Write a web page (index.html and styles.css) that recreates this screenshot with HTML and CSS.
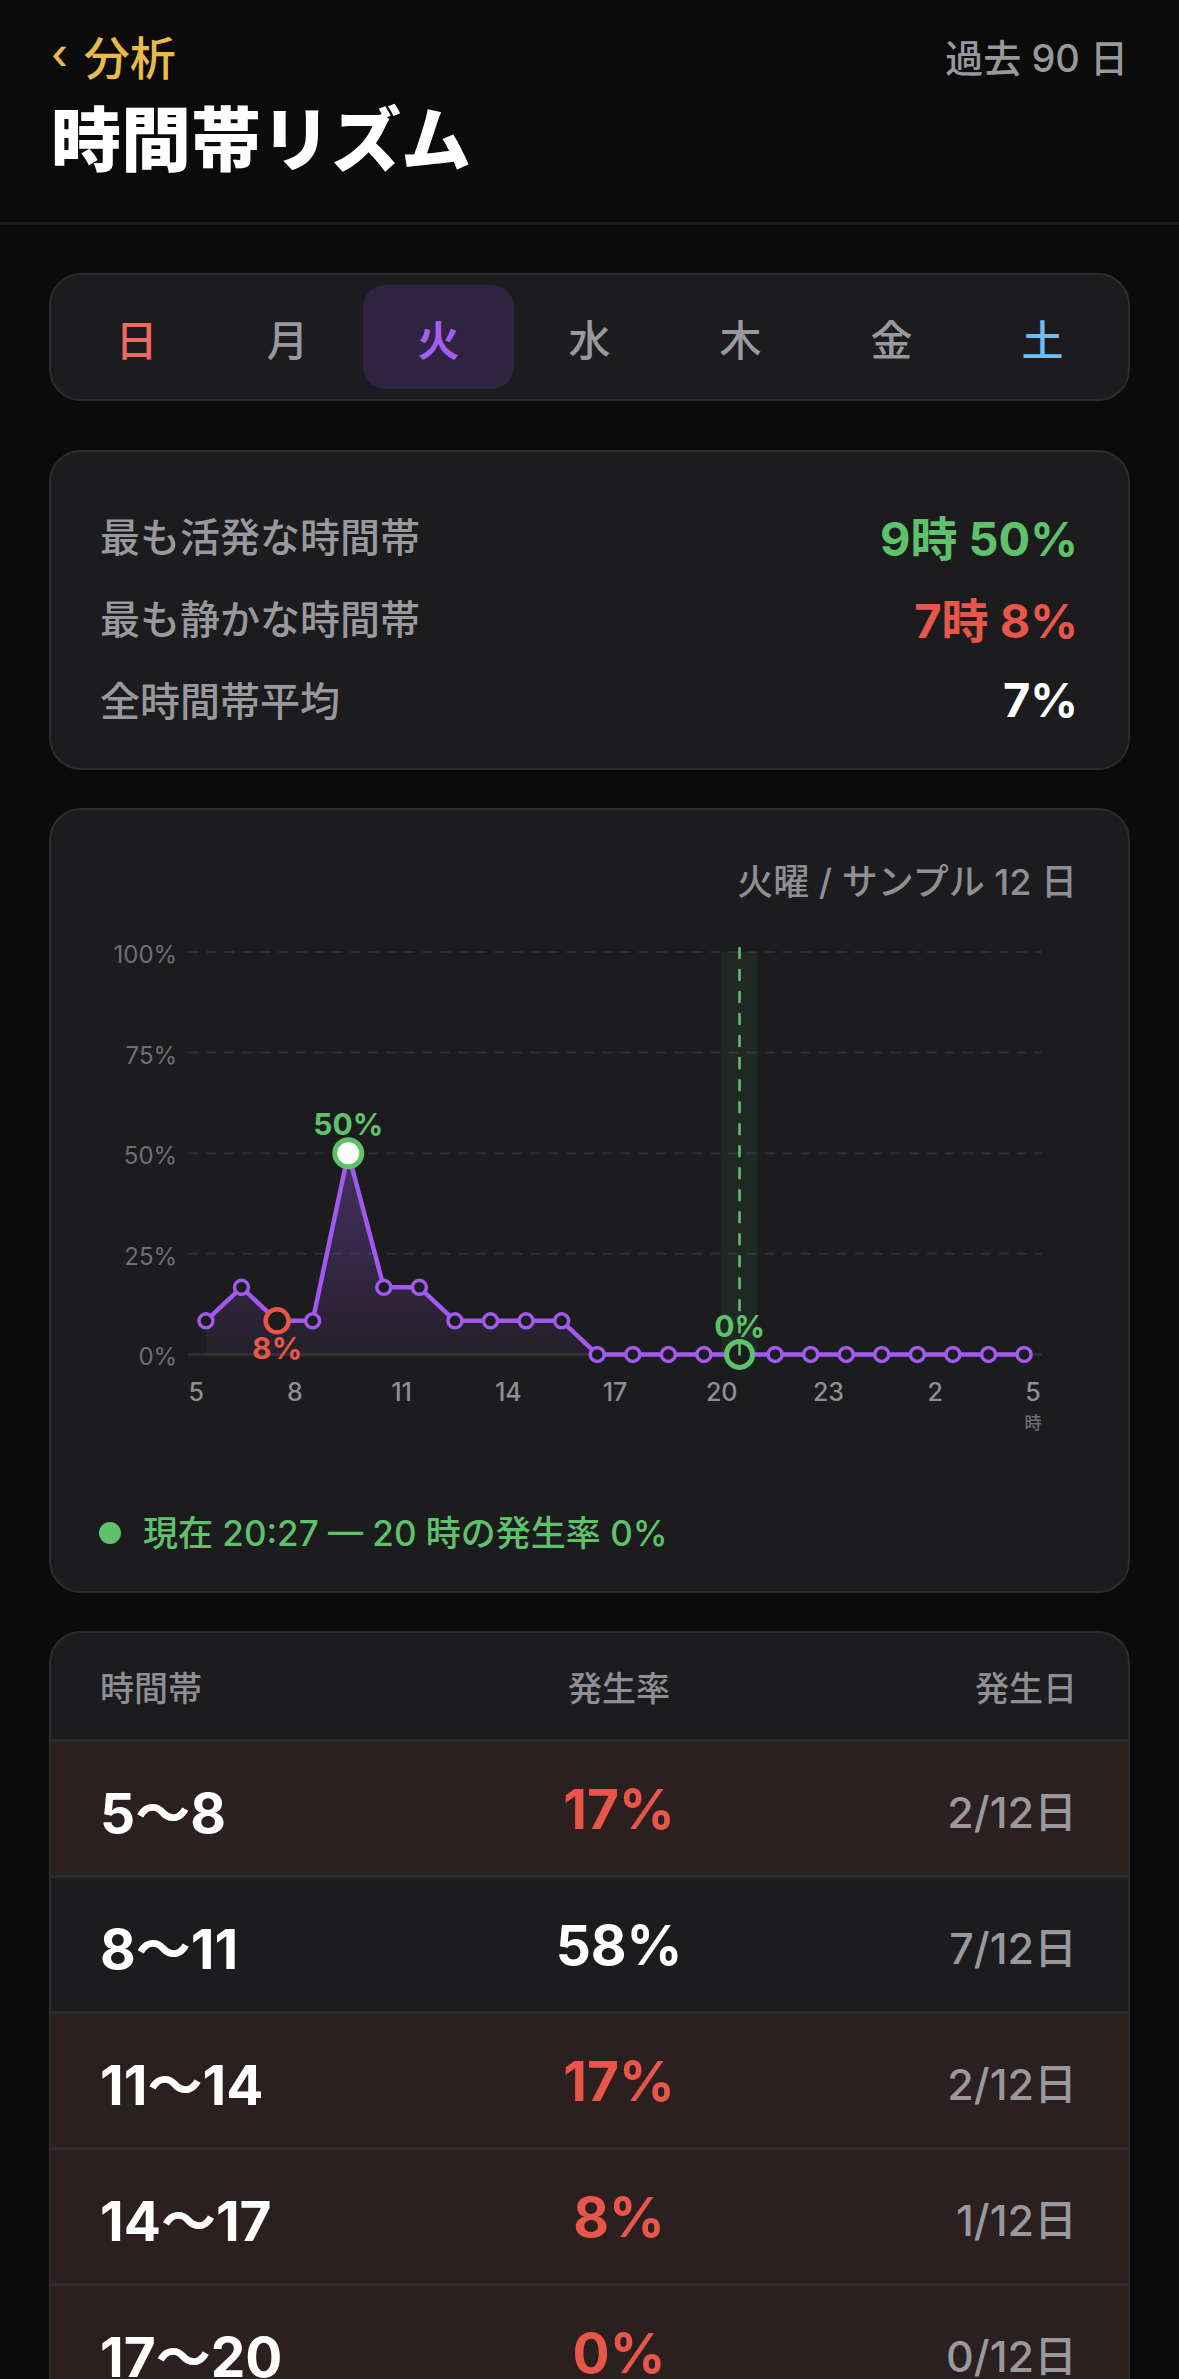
FILE: index.html
```html
<!DOCTYPE html>
<html lang="ja">

<head>
  <meta charset="UTF-8" />
  <meta name="viewport" content="width=device-width, initial-scale=1.0" />
  <title>時間帯リズム</title>
  <link rel="stylesheet" href="styles.css">
</head>

<body>

  <!-- ヘッダー -->
  <header class="header">
    <div class="header-top">
      <a class="back" href="#"><span class="chev">‹</span>分析</a>
      <span class="range">過去 90 日</span>
    </div>
    <h1>時間帯リズム</h1>
  </header>

  <main class="page">
    <!-- 曜日切り替え -->
    <div class="card days">
      <div class="day sun">日</div>
      <div class="day">月</div>
      <div class="day active">火</div>
      <div class="day">水</div>
      <div class="day">木</div>
      <div class="day">金</div>
      <div class="day sat">土</div>
    </div>

    <!-- サマリー -->
    <div class="card stats">
      <div class="stat-row">
        <span class="stat-label">最も活発な時間帯</span>
        <span class="stat-value good">9時 50%</span>
      </div>
      <div class="stat-row">
        <span class="stat-label">最も静かな時間帯</span>
        <span class="stat-value bad">7時 8%</span>
      </div>
      <div class="stat-row">
        <span class="stat-label">全時間帯平均</span>
        <span class="stat-value">7%</span>
      </div>
    </div>

    <!-- グラフ -->
    <div class="card chart-card">
      <div class="chart-caption">火曜 / サンプル 12 日</div>
      <svg class="chart" viewBox="0 0 1076 520" xmlns="http://www.w3.org/2000/svg">
        <defs>
          <linearGradient id="area" x1="0" y1="0" x2="0" y2="1">
            <stop offset="0" stop-color="#a259f0" stop-opacity="0.32" />
            <stop offset="1" stop-color="#a259f0" stop-opacity="0.06" />
          </linearGradient>
        </defs>

        <!-- 目盛り -->
        <g class="grid">
          <line x1="137" y1="32" x2="990" y2="32" />
          <line x1="137" y1="132.5" x2="990" y2="132.5" />
          <line x1="137" y1="233" x2="990" y2="233" />
          <line x1="137" y1="333.5" x2="990" y2="333.5" />
        </g>
        <line class="base" x1="137" y1="434" x2="990" y2="434" />

        <g class="y-labels">
          <text x="126" y="43">100%</text>
          <text x="126" y="143.5">75%</text>
          <text x="126" y="244">50%</text>
          <text x="126" y="344.5">25%</text>
          <text x="126" y="445">0%</text>
        </g>

        <!-- 現在の時間帯 -->
        <rect class="now-band" x="670.1" y="32" width="35.5" height="402" />

        <path class="area" d="M154.8 434 L154.8 400.5 L190.3 367 L225.9 400.5 L261.4 400.5 L297 233 L332.5 367 L368 367 L403.6 400.5 L439.1 400.5 L474.6 400.5 L510.2 400.5 L545.7 434 Z" />
        <polyline class="line" points="154.8,400.5 190.3,367 225.9,400.5 261.4,400.5 297,233 332.5,367 368,367 403.6,400.5 439.1,400.5 474.6,400.5 510.2,400.5 545.7,434 581.3,434 616.8,434 652.3,434 687.9,434 723.4,434 759,434 794.5,434 830,434 865.6,434 901.1,434 936.7,434 972.2,434" />

        <g class="dots">
          <circle cx="154.8" cy="400.5" r="7" />
          <circle cx="190.3" cy="367" r="7" />
          <circle cx="261.4" cy="400.5" r="7" />
          <circle cx="332.5" cy="367" r="7" />
          <circle cx="368" cy="367" r="7" />
          <circle cx="403.6" cy="400.5" r="7" />
          <circle cx="439.1" cy="400.5" r="7" />
          <circle cx="474.6" cy="400.5" r="7" />
          <circle cx="510.2" cy="400.5" r="7" />
          <circle cx="545.7" cy="434" r="7" />
          <circle cx="581.3" cy="434" r="7" />
          <circle cx="616.8" cy="434" r="7" />
          <circle cx="652.3" cy="434" r="7" />
          <circle cx="723.4" cy="434" r="7" />
          <circle cx="759" cy="434" r="7" />
          <circle cx="794.5" cy="434" r="7" />
          <circle cx="830" cy="434" r="7" />
          <circle cx="865.6" cy="434" r="7" />
          <circle cx="901.1" cy="434" r="7" />
          <circle cx="936.7" cy="434" r="7" />
          <circle cx="972.2" cy="434" r="7" />
        </g>

        <circle class="dot-low" cx="225.9" cy="400.5" r="11.5" />
        <circle class="dot-peak" cx="297" cy="233" r="13.5" />
        <circle class="dot-now" cx="687.9" cy="434" r="13" />
        <line class="now-line" x1="687.9" y1="27" x2="687.9" y2="440" />

        <text class="mark good" x="297" y="215">50%</text>
        <text class="mark bad" x="225.9" y="439">8%</text>
        <text class="mark good" x="687.9" y="417">0%</text>

        <g class="x-labels">
          <text x="145" y="481">5</text>
          <text x="243.6" y="481">8</text>
          <text x="350.3" y="481">11</text>
          <text x="456.9" y="481">14</text>
          <text x="563.5" y="481">17</text>
          <text x="670.1" y="481">20</text>
          <text x="776.8" y="481">23</text>
          <text x="883.4" y="481">2</text>
          <text x="981" y="481">5</text>
          <text class="unit" x="981" y="509">時</text>
        </g>
      </svg>
      <div class="legend"><span class="legend-dot"></span>現在 20:27 — 20 時の発生率 0%</div>
    </div>

    <!-- 時間帯テーブル -->
    <div class="card table">
      <div class="trow thead">
        <span>時間帯</span>
        <span class="c">発生率</span>
        <span class="r">発生日</span>
      </div>
      <div class="trow low">
        <span class="slot">5〜8</span>
        <span class="c rate bad">17%</span>
        <span class="r days-count">2/12日</span>
      </div>
      <div class="trow">
        <span class="slot">8〜11</span>
        <span class="c rate">58%</span>
        <span class="r days-count">7/12日</span>
      </div>
      <div class="trow low">
        <span class="slot">11〜14</span>
        <span class="c rate bad">17%</span>
        <span class="r days-count">2/12日</span>
      </div>
      <div class="trow low">
        <span class="slot">14〜17</span>
        <span class="c rate bad">8%</span>
        <span class="r days-count">1/12日</span>
      </div>
      <div class="trow low">
        <span class="slot">17〜20</span>
        <span class="c rate bad">0%</span>
        <span class="r days-count">0/12日</span>
      </div>
    </div>
  </main>

</body>

</html>
```

FILE: styles.css
```css
* {
  box-sizing: border-box;
}
body {
  margin: 0;
  background-color: #0b0b0b;
  color: #fff;
  font-family: Inter, "Noto Sans CJK JP", sans-serif;
}

/* ヘッダー */
.header {
  padding: 25px 51px 39px;
  border-bottom: 3px solid #1c1c1e;
}
.header-top {
  display: flex;
  justify-content: space-between;
  align-items: center;
  height: 60px;
}
.back {
  display: flex;
  align-items: center;
  color: #e9b949;
  font-size: 46px;
  font-weight: 500;
  text-decoration: none;
}
.chev {
  font-size: 42px;
  margin-right: 16px;
  margin-top: -4px;
}
.range {
  color: #98989d;
  font-size: 38px;
  font-weight: 500;
}
h1 {
  margin: 14px 0 0;
  font-size: 70px;
  font-weight: 900;
  line-height: 84px;
}

.page {
  padding: 48px 49px 0;
}
.card {
  background: #1c1c1e;
  border: 2px solid #2c2c2e;
  border-radius: 32px;
}

/* 曜日 */
.days {
  display: grid;
  grid-template-columns: repeat(7, 1fr);
  padding: 10px;
}
.day {
  height: 104px;
  display: flex;
  align-items: center;
  justify-content: center;
  font-size: 42px;
  font-weight: 500;
  color: #98989d;
  border-radius: 22px;
}
.day.active {
  background: #2e2340;
  color: #a35df0;
  font-weight: 700;
}
.day.sun {
  color: #ec6a64;
}
.day.sat {
  color: #6ebcf2;
}

/* サマリー */
.stats {
  margin-top: 49px;
  padding: 53px 50px 39px 49px;
  display: flex;
  flex-direction: column;
  gap: 22px;
}
.stat-row {
  display: flex;
  justify-content: space-between;
  align-items: center;
  height: 60px;
}
.stat-label {
  font-size: 40px;
  font-weight: 500;
  color: #98989d;
}
.stat-value {
  font-size: 47px;
  font-weight: 700;
}
.good {
  color: #5ec26a;
  fill: #5ec26a;
}
.bad {
  color: #e8564a;
  fill: #e8564a;
}

/* グラフ */
.chart-card {
  margin-top: 38px;
}
.chart-caption {
  padding: 50px 51px 0;
  text-align: right;
  font-size: 36px;
  font-weight: 500;
  line-height: 44px;
  color: #8e8e93;
}
.chart {
  display: block;
  width: 100%;
  margin-top: 16px;
}
.grid line {
  stroke: #2e2e31;
  stroke-width: 2;
  stroke-dasharray: 10 8;
}
.base {
  stroke: #2e2e31;
  stroke-width: 3;
}
.y-labels text {
  font-size: 24px;
  fill: #6e6e73;
  text-anchor: end;
}
.x-labels text {
  font-size: 25px;
  font-weight: 500;
  fill: #8e8e93;
  text-anchor: middle;
}
.x-labels .unit {
  font-size: 17px;
  fill: #6e6e73;
}
.now-band {
  fill: #5ec26a;
  fill-opacity: 0.08;
}
.now-line {
  stroke: #5ec26a;
  stroke-width: 2.5;
  stroke-dasharray: 12 10;
}
.area {
  fill: url(#area);
}
.line {
  fill: none;
  stroke: #a259f0;
  stroke-width: 4.5;
  stroke-linejoin: round;
}
.dots circle {
  fill: #1c1c1e;
  stroke: #a259f0;
  stroke-width: 3.5;
}
.dot-low {
  fill: #1c1c1e;
  stroke: #e8564a;
  stroke-width: 4.5;
}
.dot-peak {
  fill: #fff;
  stroke: #5ec26a;
  stroke-width: 5;
}
.dot-now {
  fill: #1c1c1e;
  stroke: #5ec26a;
  stroke-width: 5;
}
.mark {
  font-size: 30px;
  font-weight: 700;
  text-anchor: middle;
}
.legend {
  display: flex;
  align-items: center;
  gap: 22px;
  margin-top: 71px;
  padding: 0 49px 36px 48px;
  font-size: 35px;
  font-weight: 500;
  line-height: 44px;
  color: #5ec26a;
}
.legend-dot {
  width: 22px;
  height: 22px;
  border-radius: 50%;
  background: #5ec26a;
}

/* テーブル */
.table {
  margin-top: 38px;
  overflow: hidden;
}
.trow {
  display: grid;
  grid-template-columns: 1.2fr 1fr 1fr;
  align-items: center;
  height: 136px;
  padding: 0 51px 0 49px;
  border-top: 3px solid #2c2c2e;
}
.trow.low {
  background: #2b1f20;
}
.thead {
  height: 106px;
  border-top: none;
  font-size: 34px;
  font-weight: 500;
  color: #8e8e93;
}
.c {
  text-align: center;
}
.r {
  text-align: right;
}
.slot {
  font-size: 55px;
  font-weight: 700;
}
.rate {
  font-size: 55px;
  font-weight: 700;
}
.days-count {
  font-size: 43px;
  font-weight: 500;
  color: #98989d;
}
```
